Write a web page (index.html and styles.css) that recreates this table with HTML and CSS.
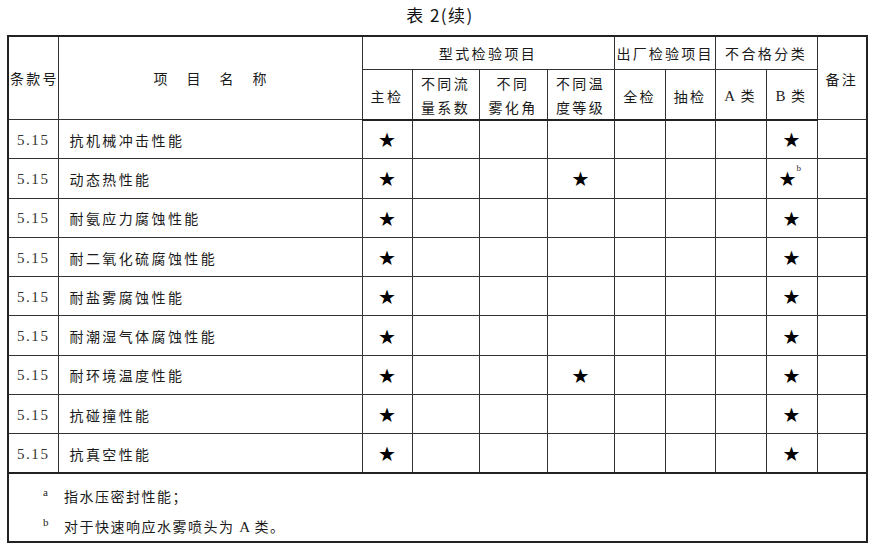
FILE: index.html
```html
<!DOCTYPE html>
<html lang="zh">
<head>
<meta charset="utf-8">
<link rel="stylesheet" href="styles.css">
</head>
<body>
<div class="page">
  <div class="title">表 2(续)</div>
  <table class="grid">
    <colgroup>
      <col style="width:50px"><col style="width:304px"><col style="width:50px"><col style="width:67px"><col style="width:68px"><col style="width:67px"><col style="width:51px"><col style="width:50px"><col style="width:51px"><col style="width:51px"><col style="width:50px">
    </colgroup>
    <thead>
      <tr class="h1">
        <th rowspan="2" class="tight">条款号</th>
        <th rowspan="2" class="wide">项目名称</th>
        <th colspan="4">型式检验项目</th>
        <th colspan="2" class="tight">出厂检验项目</th>
        <th colspan="2">不合格分类</th>
        <th rowspan="2" class="note">备注</th>
      </tr>
      <tr class="h2">
        <th class="low">主检</th>
        <th class="two">不同流<br>量系数</th>
        <th class="two">不同<br>雾化角</th>
        <th class="two">不同温<br>度等级</th>
        <th class="low">全检</th>
        <th class="low">抽检</th>
        <th class="low"><span class="lat">A</span> 类</th>
        <th class="low"><span class="lat">B</span> 类</th>
      </tr>
    </thead>
    <tbody>
      <tr><td class="num">5.15</td><td class="name">抗机械冲击性能</td><td class="s">★</td><td></td><td></td><td></td><td></td><td></td><td></td><td class="s">★</td><td></td></tr>
      <tr><td class="num">5.15</td><td class="name">动态热性能</td><td class="s">★</td><td></td><td></td><td class="s">★</td><td></td><td></td><td></td><td class="s"><span class="sb">★<sup>b</sup></span></td><td></td></tr>
      <tr><td class="num">5.15</td><td class="name">耐氨应力腐蚀性能</td><td class="s">★</td><td></td><td></td><td></td><td></td><td></td><td></td><td class="s">★</td><td></td></tr>
      <tr><td class="num">5.15</td><td class="name">耐二氧化硫腐蚀性能</td><td class="s">★</td><td></td><td></td><td></td><td></td><td></td><td></td><td class="s">★</td><td></td></tr>
      <tr><td class="num">5.15</td><td class="name">耐盐雾腐蚀性能</td><td class="s">★</td><td></td><td></td><td></td><td></td><td></td><td></td><td class="s">★</td><td></td></tr>
      <tr><td class="num">5.15</td><td class="name">耐潮湿气体腐蚀性能</td><td class="s">★</td><td></td><td></td><td></td><td></td><td></td><td></td><td class="s">★</td><td></td></tr>
      <tr><td class="num">5.15</td><td class="name">耐环境温度性能</td><td class="s">★</td><td></td><td></td><td class="s">★</td><td></td><td></td><td></td><td class="s">★</td><td></td></tr>
      <tr><td class="num">5.15</td><td class="name">抗碰撞性能</td><td class="s">★</td><td></td><td></td><td></td><td></td><td></td><td></td><td class="s">★</td><td></td></tr>
      <tr><td class="num">5.15</td><td class="name">抗真空性能</td><td class="s">★</td><td></td><td></td><td></td><td></td><td></td><td></td><td class="s">★</td><td></td></tr>
      <tr class="foot">
        <td colspan="11">
          <div class="fn"><span class="mark">a</span><span class="ft">指水压密封性能；</span></div>
          <div class="fn"><span class="mark">b</span><span class="ft">对于快速响应水雾喷头为 <span class="lat">A</span> 类。</span></div>
        </td>
      </tr>
    </tbody>
  </table>
</div>
</body>
</html>
```

FILE: styles.css
```css
html, body {
  margin: 0;
  padding: 0;
  background: #fff;
}
body {
  font-family: "Noto Sans CJK SC", "Noto Sans", sans-serif;
  color: #1a1a1a;
}
.page {
  padding: 0 0 0 7px;
  width: 860px;
}
.title {
  height: 35px;
  line-height: 30px;
  text-align: center;
  font-size: 17px;
  letter-spacing: 1.5px;
  color: #111;
  padding-left: 6px;
}
.grid {
  border-collapse: collapse;
  table-layout: fixed;
  width: 860px;
  border: 2px solid #222;
}
.grid th, .grid td {
  border: 1px solid #333;
  padding: 0;
  font-weight: 400;
  font-size: 14px;
  line-height: 20px;
  text-align: center;
  vertical-align: middle;
  letter-spacing: 2.4px;
  white-space: nowrap;
  overflow: visible;
}
.grid thead tr.h2 th {
  border-bottom: 2px solid #222;
}
.grid .h1 { height: 33px; }
.grid .h2 { height: 47px; }
.grid th.tight { letter-spacing: 2.2px; text-indent: 1px; }
.grid th.wide { letter-spacing: 19px; text-indent: 19px; }
.grid th.note { vertical-align: top; padding-top: 32px; }
.grid th.low { padding-top: 3px; }
.grid th.two { line-height: 24px; padding-top: 1px; }
.lat { font-family: "Liberation Serif", serif; font-size: 15px; letter-spacing: 0; }
.grid tbody tr { height: 39.3px; }
.grid td.num {
  font-family: "Liberation Serif", serif;
  font-size: 15px;
  color: #333;
  letter-spacing: 1.6px;
  padding-top: 1px;
}
.grid td.name {
  text-align: left;
  padding-left: 11px;
  padding-top: 1px;
}
.grid td.s {
  font-family: "DejaVu Sans", sans-serif;
  font-size: 20px;
  line-height: 20px;
  letter-spacing: 0;
  color: #000;
  padding-top: 2px;
}
.sb { position: relative; left: -4px; }
.sb sup {
  font-family: "Liberation Serif", serif;
  font-size: 9px;
  line-height: 9px;
  position: absolute;
  top: -3px;
  left: 18px;
  color: #333;
}
.grid tr.foot { height: 66px; }
.grid tr.foot td {
  border-top: 2px solid #222;
  text-align: left;
  vertical-align: top;
  padding-top: 7px;
}
.fn {
  display: flex;
  align-items: center;
  height: 30px;
}
.mark {
  font-family: "Liberation Serif", serif;
  font-size: 11px;
  width: 55px;
  padding-left: 34px;
  box-sizing: border-box;
  letter-spacing: 0;
  position: relative;
  top: -4px;
  color: #222;
}
.ft { letter-spacing: 1.5px; }
```
